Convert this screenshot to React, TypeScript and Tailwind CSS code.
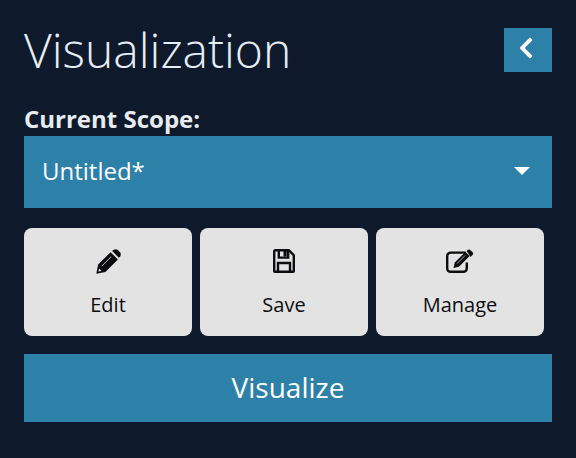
import { FaChevronLeft } from "react-icons/fa";
import type { ReactNode } from "react";

function PencilIcon() {
  return (
    <svg viewBox="0 0 24 24" width="25" height="25" fill="currentColor">
      <path d="M0.3 23.7 L2 15 L14 3 L21 10 L9 22 Z" />
      <path d="M15.5 2 L17 0.7 Q19 -0.3 20.7 0.7 L23.3 3.3 Q24.3 5 23.3 7 L22 8.5 Z" />
      <path d="M5.5 16.5 L14.5 7.5" stroke="#e4e4e6" strokeWidth="0.8" fill="none" />
      <path d="M3 18.7 L5.3 21 L2.3 21.7 Z" fill="#e4e4e6" />
    </svg>
  );
}

function SaveIcon() {
  return (
    <svg viewBox="0 0 22 24" width="22" height="24" fill="none" stroke="currentColor" strokeWidth="2.4">
      <path d="M2.5 1.2 H15.8 L20.8 6.2 V21.4 Q20.8 22.8 19.4 22.8 H2.5 Q1.2 22.8 1.2 21.4 V2.5 Q1.2 1.2 2.5 1.2 Z" />
      <path d="M5.8 1.2 V8.6 H15.2 V1.2" />
      <path d="M5 22.8 V14 H17 V22.8" />
      <rect x="10.5" y="2" width="3.2" height="5.5" fill="currentColor" stroke="none" />
    </svg>
  );
}

function EditIcon() {
  return (
    <svg viewBox="0 0 28 24" width="28" height="24" fill="none" stroke="currentColor" strokeWidth="2.4">
      <path d="M20 3.6 H5 Q1.2 3.6 1.2 7.5 V19 Q1.2 22.8 5 22.8 H17 Q20.8 22.8 20.8 19 V13.5" />
      <path d="M7.5 19 L8.8 13.4 L19.5 2.9 L23.6 7 L13 17.7 Z" fill="currentColor" stroke="none" />
      <path d="M20.6 1.9 L22 0.7 Q23 0.1 24 0.7 L26.9 3.6 Q27.6 4.6 26.9 5.6 L24.6 7.9 Z" fill="currentColor" stroke="none" />
      <path d="M11 14.5 L19 6.5" stroke="#e4e4e6" strokeWidth="0.7" />
    </svg>
  );
}

function Tool({ icon, label }: { icon: ReactNode; label: string }) {
  return (
    <button className="w-[168px] h-[108px] rounded-[8px] bg-[#e4e3e4] text-[#0d0d0f] flex flex-col items-center">
      <span className="h-[26px] mt-[20px] flex items-center justify-center">{icon}</span>
      <span className="mt-[17px] text-[20px] leading-[28px]">{label}</span>
    </button>
  );
}

export default function App() {
  return (
    <div className="w-[576px] h-[458px] overflow-hidden bg-[#0e1a2b] px-[24px] font-['Open_Sans',sans-serif]">
      <div className="h-[101px] pt-[20px] flex items-start justify-between">
        <h1 className="text-[48px] leading-[60px] font-light text-[#e6edf5]">Visualization</h1>
        <button className="mt-[8px] w-[48px] h-[44px] pr-[4px] pb-[5px] bg-[#2d81a9] text-white flex items-center justify-center text-[24px]">
          <FaChevronLeft />
        </button>
      </div>
      <div className="text-[24px] leading-[35px] font-bold text-[#e8ecf1]">Current Scope:</div>
      <div className="h-[72px] bg-[#2d81a9] pl-[18px] pr-[22px] pb-[2px] flex items-center justify-between text-white">
        <span className="text-[24px]">Untitled*</span>
        <span className="w-0 h-0 border-x-[8px] border-x-transparent border-t-[8px] border-t-white" />
      </div>
      <div className="mt-[20px] flex gap-[8px]">
        <Tool icon={<PencilIcon />} label="Edit" />
        <Tool icon={<SaveIcon />} label="Save" />
        <Tool icon={<EditIcon />} label="Manage" />
      </div>
      <button className="mt-[18px] w-full h-[68px] pb-[2px] bg-[#2d81a9] text-white text-[28px] flex items-center justify-center">
        Visualize
      </button>
    </div>
  );
}
